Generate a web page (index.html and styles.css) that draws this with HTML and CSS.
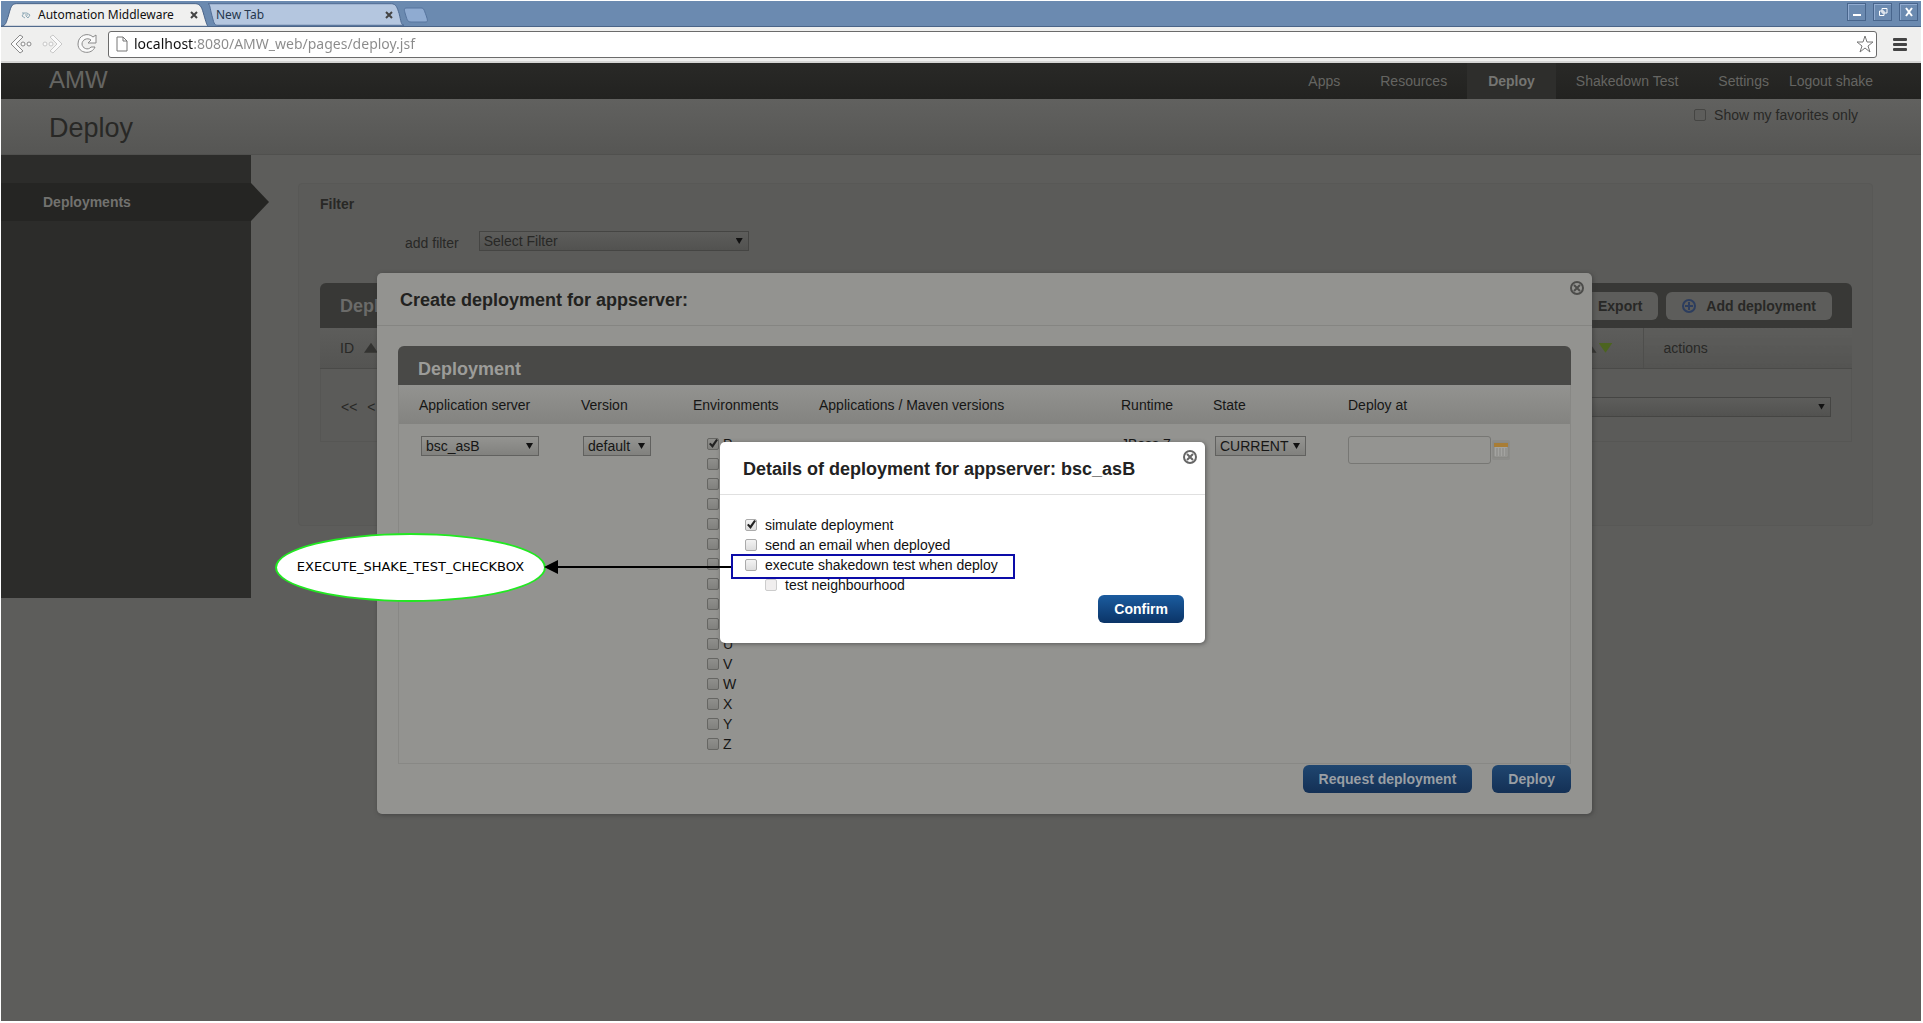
FILE: index.html
```html
<!DOCTYPE html>
<html lang="en">
<head>
<meta charset="utf-8">
<title>Automation Middleware</title>
<link rel="stylesheet" href="styles.css">
</head>
<body>
<div class="window">
  <header class="tabstrip">
    <div class="tab tab-active">
      <svg class="tab-shape" viewBox="0 0 210 25" aria-hidden="true"><path d="M0 25C5 24 5 22 7 16C10 6 10 2 16 2H197C203 2 204 7 206 14C208 21 209 24 210 25Z" fill="#f0f0ef" stroke="#4a6488"/></svg>
      <svg class="favicon" viewBox="0 0 10 10" aria-hidden="true"><path d="M1 3H6L9 5L7 8L5 6M3 3L1 6L4 8M4 5H7" fill="none" stroke="#8fa9b6"/></svg>
      <span class="tab-title">Automation Middleware</span>
      <button class="tab-close" aria-label="Close tab"><svg viewBox="0 0 8 8"><path d="M1 1L7 7M7 1L1 7"/></svg></button>
    </div>
    <div class="tab tab-idle">
      <svg class="tab-shape" viewBox="0 0 200 25" aria-hidden="true"><path d="M0 2H187C192 2 193 6 195 12C197 20 197 24 200 24H10C6 24 6 21 4 14C2 7 2 2 0 2Z" fill="#b4c6df" stroke="#4f6b92"/></svg>
      <span class="tab-title">New Tab</span>
      <button class="tab-close" aria-label="Close tab"><svg viewBox="0 0 8 8"><path d="M1 1L7 7M7 1L1 7"/></svg></button>
    </div>
    <button class="new-tab" aria-label="Open new tab"><svg viewBox="0 0 26 16"><path d="M4 1H18C21 1 21 3 23 8C25 14 25 15 22 15H8C4 15 4 12 2 6C1 2 1 1 4 1Z" fill="#8fabd1" stroke="#56749e"/></svg></button>
    <div class="window-controls">
      <button aria-label="Minimize"><svg viewBox="0 0 10 10"><path d="M1 8H9" stroke-width="2"/></svg></button>
      <button aria-label="Restore"><svg viewBox="0 0 10 10"><path d="M4 1.500H9V6H4ZM1.500 4H6V8.500H1.500Z"/></svg></button>
      <button aria-label="Close"><svg viewBox="0 0 10 10"><path d="M2 1L8 9M8 1L2 9" stroke-width="2"/></svg></button>
    </div>
  </header>

  <div class="toolbar">
    <button class="tool" aria-label="Back"><svg viewBox="0 0 24 22"><path d="M12 2L3 11L12 20L15 18L8 11L15 4Z"/><circle cx="15" cy="11" r="2"/><circle cx="21" cy="11" r="2"/></svg></button>
    <button class="tool tool-off" aria-label="Forward"><svg viewBox="0 0 24 22"><path d="M12 2L21 11L12 20L9 18L16 11L9 4Z"/><circle cx="10" cy="11" r="2"/><circle cx="4" cy="11" r="2"/></svg></button>
    <button class="tool tool-reload" aria-label="Reload"><svg viewBox="0 0 24 22"><path d="M22 2V10H14L17 7C13 4 8 7 8 11C8 15 14 18 17 14H21C18 22 4 21 4 11C4 2 14 -1 19 4Z"/></svg></button>
    <div class="address">
      <svg class="page-icon" viewBox="0 0 14 16" aria-hidden="true"><path d="M2 1H8L12 5V15H2ZM8 1V5H12" fill="#fff" stroke="#777"/></svg>
      <input type="text" class="url" aria-label="Address" value="localhost:8080/AMW_web/pages/deploy.jsf">
      <button class="star" aria-label="Bookmark"><svg viewBox="0 0 18 18"><path d="M9 1L11 7L17 7L12 11L14 17L9 13L4 17L6 11L1 7L7 7Z"/></svg></button>
    </div>
    <button class="menu" aria-label="Menu"><i></i><i></i><i></i></button>
  </div>

  <div class="page">
    <nav class="topbar">
      <a class="brand" href="#">AMW</a>
      <a class="nav-apps" href="#">Apps</a>
      <a class="nav-resources" href="#">Resources</a>
      <a class="nav-current" href="#">Deploy</a>
      <a class="nav-shakedown" href="#">Shakedown Test</a>
      <a class="nav-settings" href="#">Settings</a>
      <a href="#">Logout shake</a>
    </nav>
    <div class="page-head">
      <h1>Deploy</h1>
      <label class="favorites"><input type="checkbox">Show my favorites only</label>
    </div>
    <div class="columns">
      <aside class="sidebar"><a href="#" class="side-item">Deployments</a></aside>
      <main class="content">
        <h2>Filter</h2>
        <div class="filter-row">
          <label for="filter">add filter</label>
          <span class="select select-filter"><select id="filter"><option>Select Filter</option></select></span>
        </div>
        <section class="list">
          <div class="list-head">
            <h3>Deployments</h3>
            <button class="light-button">Export</button>
            <button class="light-button"><svg viewBox="0 0 14 14" aria-hidden="true"><circle cx="7" cy="7" r="6"/><path d="M7 3V11M3 7H11"/></svg>Add deployment</button>
          </div>
          <table class="list-table">
            <colgroup><col><col class="col-actions"></colgroup>
            <tr>
              <th><div class="sort-cells"><span>ID</span><i class="up"></i><i class="up up-last"></i><i class="down"></i></div></th>
              <th>actions</th>
            </tr>
          </table>
          <div class="pager">
            <a href="#">&lt;&lt;</a><a href="#">&lt;</a>
            <span class="select"><select aria-label="Rows per page"><option></option></select></span>
          </div>
        </section>
      </main>
    </div>

    <section class="dialog create" role="dialog" aria-labelledby="create-title">
      <header class="dialog-head">
        <h2 id="create-title">Create deployment for appserver:</h2>
        <button class="dialog-close" aria-label="Close"><svg viewBox="0 0 16 16"><circle cx="8" cy="8" r="6"/><path d="M5 5L11 11M11 5L5 11"/></svg></button>
      </header>
      <div class="box">
        <h3>Deployment</h3>
        <table>
          <colgroup><col class="c1"><col class="c2"><col class="c3"><col class="c4"><col class="c5"><col class="c6"><col></colgroup>
          <tr><th>Application server</th><th>Version</th><th>Environments</th><th>Applications / Maven versions</th><th>Runtime</th><th>State</th><th>Deploy at</th></tr>
          <tr>
            <td><span class="select select-server"><select aria-label="Application server"><option>bsc_asB</option></select></span></td>
            <td><span class="select select-version"><select aria-label="Version"><option>default</option></select></span></td>
            <td>
              <div class="envs">
                <label><input type="checkbox" checked>P</label>
                <label><input type="checkbox" aria-label="L"></label>
                <label><input type="checkbox" aria-label="M"></label>
                <label><input type="checkbox" aria-label="N"></label>
                <label><input type="checkbox" aria-label="O"></label>
                <label><input type="checkbox" aria-label="Q"></label>
                <label><input type="checkbox" aria-label="R"></label>
                <label><input type="checkbox" aria-label="S"></label>
                <label><input type="checkbox" aria-label="T"></label>
                <label><input type="checkbox" aria-label="I"></label>
                <label><input type="checkbox">U</label>
                <label><input type="checkbox">V</label>
                <label><input type="checkbox">W</label>
                <label><input type="checkbox">X</label>
                <label><input type="checkbox">Y</label>
                <label><input type="checkbox">Z</label>
              </div>
            </td>
            <td></td>
            <td class="runtime">JBoss 7</td>
            <td><span class="select select-state"><select aria-label="State"><option>CURRENT</option></select></span></td>
            <td><div class="date"><input type="text" aria-label="Deploy at"><button aria-label="Pick a date"><svg viewBox="0 0 18 20"><rect x="2" y="3" width="14" height="14" fill="#a3a3a0" stroke="#858582"/><path d="M2 3H16V7H2Z" fill="#a87d36"/><path d="M5 8V16M8 8V16M11 8V16M14 8V16" stroke="#858582"/></svg></button></div></td>
          </tr>
        </table>
      </div>
      <div class="dialog-actions"><button class="blue-button">Request deployment</button><button class="blue-button">Deploy</button></div>
    </section>

    <section class="dialog details" role="dialog" aria-labelledby="details-title">
      <header class="dialog-head">
        <h2 id="details-title">Details of deployment for appserver: bsc_asB</h2>
        <button class="dialog-close" aria-label="Close"><svg viewBox="0 0 16 16"><circle cx="8" cy="8" r="6"/><path d="M5 5L11 11M11 5L5 11"/></svg></button>
      </header>
      <div class="options">
        <label><input type="checkbox" checked>simulate deployment</label>
        <label><input type="checkbox">send an email when deployed</label>
        <label><input type="checkbox">execute shakedown test when deploy</label>
        <label class="sub"><input type="checkbox" disabled>test neighbourhood</label>
      </div>
      <div class="dialog-actions"><button class="blue-button">Confirm</button></div>
      <div class="highlight"></div>
    </section>

    <div class="callout">EXECUTE_SHAKE_TEST_CHECKBOX</div>
    <svg class="arrow" viewBox="0 0 187 14" aria-hidden="true"><path d="M0 7L14 0V14Z"/><path d="M12 6H187V8H12Z"/></svg>
  </div>
</div>
</body>
</html>
```
FILE: styles.css
```css
* { box-sizing: border-box; }
body {
  margin: 0;
  padding: 1px 2px 2px 1px;
  background: #fff;
  font: 14px/20px "Liberation Sans", Arial, sans-serif;
  color: #111;
}
h1, h2, h3 { margin: 0; }
a { color: inherit; text-decoration: none; }
button { padding: 0; border: 0; background: none; font: inherit; color: inherit; }
svg { display: block; }
.window { display: flex; flex-direction: column; min-height: calc(100vh - 3px); }

/* browser frame */
.tabstrip {
  display: flex;
  height: 26px;
  background: #6b8ab0;
  border-bottom: 1px solid #4a6488;
  font: 12px/22px "Noto Sans", "Open Sans", sans-serif;
}
.tab { position: relative; display: flex; align-items: center; height: 26px; }
.tab-active { width: 207px; padding: 2px 10px 0 20px; gap: 7px; z-index: 1; }
.tab-idle { width: 196px; padding: 2px 11px 0 8px; color: #26374d; }
.tab-shape { position: absolute; left: 0; top: 0; height: 26px; width: 100%; z-index: -1; overflow: visible; }
.tab-idle .tab-shape { z-index: 0; }
.tab-title { flex: 1; position: relative; white-space: nowrap; }
.favicon { width: 10px; height: 10px; }
.tab-close { position: relative; width: 8px; }
.tab-close svg { stroke: #444; stroke-width: 2; }
.new-tab { width: 26px; height: 16px; margin: 6px 0 0 -1px; }
.window-controls { display: flex; gap: 3px; margin: 2px 3px 0 auto; }
.window-controls button {
  display: flex; align-items: center; justify-content: center;
  width: 19px; height: 18px;
  border: 1px solid #48658c; box-shadow: inset 1px 1px #91abd0;
}
.window-controls { gap: 7px; }
.window-controls svg { width: 10px; height: 10px; fill: none; stroke: #fff; }
.toolbar {
  display: flex;
  align-items: center;
  height: 36px;
  padding: 0 14px 0 7px;
  background: #efefee;
  border-bottom: 2px solid #d5d5d4;
}
.tool { width: 24px; margin-right: 9px; }
.tool svg { fill: #fafafa; stroke: #8a8a8a; }
.tool-off svg { stroke: #c8c8c8; }
.tool-reload { margin-right: 10px; }
.address {
  flex: 1;
  display: flex;
  align-items: center;
  height: 27px;
  padding: 0 2px 0 6px;
  border: 1px solid #6b6b6b;
  border-radius: 3px;
  background: #fff;
}
.page-icon { width: 14px; height: 16px; }
.url {
  flex: 1;
  margin-left: 5px;
  padding: 0;
  border: 0;
  outline: 0;
  font: 14px/22px "Noto Sans", "Open Sans", sans-serif;
  color: transparent;
  background: linear-gradient(90deg, #111 60px, #8a8a8a 60px) text;
  -webkit-background-clip: text;
}
.star { width: 18px; }
.star svg { fill: #fff; stroke: #777; }
.menu { display: flex; flex-direction: column; gap: 2px; margin-left: 16px; }
.menu i { width: 14px; height: 3px; border-radius: 1px; background: #444; }

/* application page */
.page { position: relative; flex: 1; background: #5d5d5b; color: #282826; }
.topbar {
  display: flex;
  align-items: center;
  height: 36px;
  padding: 0 48px;
  background: linear-gradient(#292927, #222220);
  color: #656562;
}
.brand { margin-right: auto; padding-bottom: 2px; font-size: 24px; }
.nav-apps { margin-right: 40px; }
.nav-resources { margin-right: 20px; }
.nav-current { padding: 8px 21px; background: #2e2e2c; font-weight: bold; color: #757572; }
.nav-shakedown { margin: 0 40px 0 20px; }
.nav-settings { margin-right: 20px; }
.page-head {
  display: flex;
  justify-content: space-between;
  height: 56px;
  padding: 6px 63px 0 48px;
  background: linear-gradient(#61615f, #565654);
  border-bottom: 1px solid #50504e;
}
h1 { font-size: 27px; line-height: 46px; font-weight: normal; }
.favorites { display: flex; align-items: center; gap: 8px; height: 20px; }
.columns { display: flex; align-items: flex-start; }
.sidebar { width: 250px; height: 443px; padding-top: 28px; background: #2c2c2a; }
.side-item {
  display: block;
  position: relative;
  height: 38px;
  padding-left: 42px;
  background: #252523;
  line-height: 38px;
  font-weight: bold;
  color: #72726f;
}
.side-item::after {
  content: "";
  position: absolute;
  left: 100%; top: 0;
  width: 18px; height: 38px;
  background: #252523;
  clip-path: polygon(0 0, 100% 50%, 0 100%);
}
.content {
  flex: 1;
  height: 343px;
  margin: 28px 48px 0 47px;
  padding: 10px 20px 0 21px;
  border: 1px solid #585856;
  border-radius: 4px;
  background: #5b5b59;
}
.content h2 { font-size: 14px; line-height: 20px; }
.filter-row { display: flex; align-items: flex-start; gap: 20px; padding: 17px 0 0 85px; }
.filter-row label { line-height: 24px; }

/* form controls */
.select { display: inline-block; position: relative; height: 20px; vertical-align: top; }
.select::after {
  content: "";
  position: absolute;
  right: 6px; top: 7px;
  width: 7px; height: 6px;
  background: #111;
  clip-path: polygon(0 0, 100% 0, 50% 100%);
  pointer-events: none;
}
select {
  display: block;
  appearance: none;
  width: 100%;
  height: 20px;
  padding: 0 4px;
  border: 1px solid #454543;
  border-radius: 0;
  background: linear-gradient(#5d5d5b, #525250);
  font: inherit;
  line-height: 18px;
  color: inherit;
}
.select-filter { width: 270px; }
input[type="checkbox"] {
  appearance: none;
  position: relative;
  flex: none;
  width: 12px; height: 12px;
  margin: 0;
  border: 1px solid #666663;
  border-radius: 2px;
  background: linear-gradient(#8f8f8c, #80807d);
}
.favorites input[type="checkbox"] { border-color: #454543; background: #5d5d5b; }
input[type="checkbox"]:checked::before {
  content: "";
  position: absolute;
  left: 1px; top: 0;
  width: 9px; height: 9px;
  background: #222;
  clip-path: polygon(0 55%, 18% 42%, 36% 62%, 80% 0, 100% 12%, 40% 100%);
}

/* list behind the dialogs */
.list { margin-top: 28px; }
.list-head {
  display: flex;
  align-items: center;
  gap: 8px;
  height: 45px;
  padding: 0 20px;
  border-radius: 6px 6px 0 0;
  background: #383836;
}
.list-head h3 { margin-right: auto; font-size: 18px; color: #6b6b69; }
.light-button {
  display: flex; align-items: center; gap: 10px;
  height: 28px;
  padding: 0 16px;
  border-radius: 6px;
  background: #5d5d5b;
  font-weight: bold;
}
.light-button svg { width: 14px; height: 14px; fill: none; stroke: #2c3d5e; stroke-width: 2; }
table { width: 100%; border-collapse: collapse; table-layout: fixed; }
th { padding: 0 0 0 20px; text-align: left; font-weight: normal; white-space: nowrap; }
.list-table th {
  height: 40px;
  border-right: 1px solid #4e4e4c;
  border-bottom: 1px solid #4a4a48;
  background: linear-gradient(#5d5d5b, #545452);
}
.list-table th:last-child { border-right: 0; }
.col-actions { width: 209px; }
.sort-cells { display: flex; align-items: center; gap: 2px; padding-right: 30px; }
.sort-cells span { margin-right: 8px; }
.up, .down { flex: none; width: 14px; height: 10px; background: #333331; clip-path: polygon(50% 0, 100% 100%, 0 100%); }
.sort-cells .up-last { margin-left: auto; }
.down { background: #4c6420; clip-path: polygon(0 0, 100% 0, 50% 100%); }
.pager {
  display: flex;
  align-items: center;
  gap: 10px;
  height: 73px;
  padding: 4px 20px 0;
  border: 1px solid #565654;
  border-top: 0;
}
.pager .select { flex: 1; }

/* dialogs */
.dialog { position: absolute; border-radius: 5px; box-shadow: 1px 1px 4px #3339; }
.dialog-head {
  display: flex;
  align-items: center;
  justify-content: space-between;
  height: 53px;
  padding: 2px 7px 0 23px;
}
.dialog-head h2 { font-size: 18px; color: #222; }
.dialog-close { align-self: flex-start; margin-top: 5px; width: 16px; }
.dialog-close svg { fill: none; stroke: #666; stroke-width: 2; }
.dialog-actions { display: flex; justify-content: flex-end; gap: 20px; }
.blue-button {
  height: 28px;
  padding: 0 16px;
  border-radius: 6px;
  background: linear-gradient(#1b5c9f, #0b3467);
  font-weight: bold;
  color: #fff;
}
.create {
  top: 210px; left: 376px; right: 329px;
  padding-bottom: 21px;
  background: #939390;
  color: #161615;
}
.create .dialog-head { border-bottom: 1px solid #858582; }
.create .dialog-head h2 { color: #222220; }
.create .dialog-close svg { stroke: #4c4c4a; }
.create .dialog-actions { padding: 1px 21px 0; }
.create .blue-button { background: linear-gradient(#1f4670, #143055); color: #9a9fa4; }
.box { margin: 20px 21px 0; border: 1px solid #888885; border-top: 0; border-radius: 6px 6px 0 0; }
.box h3 {
  height: 39px;
  margin: 0 -1px;
  padding: 4px 0 0 20px;
  border-radius: 6px 6px 0 0;
  background: #494947;
  line-height: 39px;
  font-size: 18px;
  color: #9c9c99;
}
.box th { height: 39px; background: linear-gradient(#939390, #838380); }
.box td { padding: 10px 0 9px 20px; vertical-align: top; }
.box select { border-color: #61615f; background: linear-gradient(#949491, #81817e); }
.box .select { margin: 2px 0 0 2px; }
.c1 { width: 162px; }
.c2 { width: 112px; }
.c3 { width: 126px; }
.c4 { width: 302px; }
.c5 { width: 92px; }
.c6 { width: 135px; }
.select-server { width: 118px; }
.select-version { width: 68px; }
.select-state { width: 91px; }
.envs { padding-left: 14px; }
.envs label { display: flex; align-items: center; gap: 4px; height: 20px; }
.date { display: flex; align-items: center; gap: 1px; padding-top: 2px; }
.date input { width: 143px; height: 28px; border: 1px solid #777774; border-radius: 3px; background: #949491; }
.date button { width: 18px; border-radius: 2px; background: #8c8c89; }
.details {
  top: 379px; left: 719px;
  width: 485px;
  padding-bottom: 20px;
  background: #fff;
  color: #111;
}
.details .dialog-head { border-bottom: 1px solid #e0e0e0; }
.options { padding: 20px 25px 0; }
.options label { display: flex; align-items: center; gap: 8px; height: 20px; }
.options .sub { padding-left: 20px; }
.options input[type="checkbox"] { border-color: #aaa; background: linear-gradient(#f3f3f3, #ddd); }
.options input[type="checkbox"]:disabled { border-color: #ccc; background: #f0eeee; }
.details .dialog-actions { padding: 0 21px; }
.highlight { position: absolute; left: 11px; top: 112px; width: 284px; height: 25px; border: 2px solid #0c0ca8; }

/* annotation */
.callout {
  position: absolute;
  left: 274px; top: 470px;
  width: 271px; height: 69px;
  border: 2px solid #22e822;
  border-radius: 50%;
  background: #fff;
  font: 13px/64px "DejaVu Sans", sans-serif;
  text-align: center;
  color: #000;
}
.arrow { position: absolute; left: 543px; top: 497px; width: 187px; height: 14px; }
```
